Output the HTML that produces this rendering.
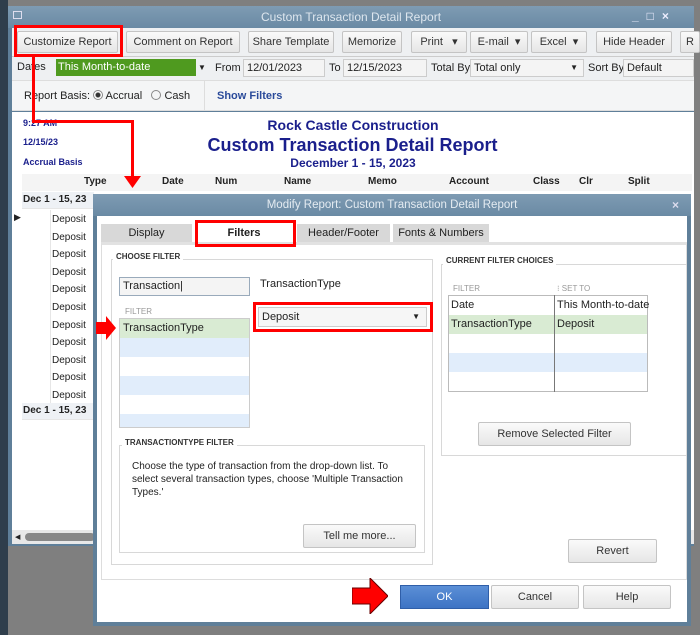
<!DOCTYPE html>
<html><head><style>
*{box-sizing:border-box;margin:0;padding:0}
body{width:700px;height:635px;position:relative;overflow:hidden;background:#7f7f7f;font-family:"Liberation Sans",Arial,sans-serif;font-size:11px;color:#222}
.a{position:absolute}
.btn{position:absolute;background:linear-gradient(#fafafa,#e6e6e6);border:1px solid #c4c4c4;border-radius:2px;text-align:center;font-size:11px;color:#333}
.red{position:absolute;border:3px solid #f00}
.rl{position:absolute;background:#f00}
.blue{color:#1a1f8c;font-weight:bold}
.row{position:absolute;left:22px;width:72px;height:17px;border-bottom:1px solid #e6e6e6}
.gb{position:absolute;border:1px solid #d8d8d8}
.gl{position:absolute;background:#fff;font-size:8px;font-weight:bold;color:#333;padding:0 3px}
</style></head><body>
<div class="a" style="left:0;top:0;width:8px;height:635px;background:#2f3e4c"></div>
<!-- main window -->
<div class="a" style="left:8px;top:6px;width:686px;height:540px;background:#5f7f99"></div>
<div class="a" style="left:8px;top:6px;width:686px;height:22px;background:linear-gradient(#7e9bb3,#6a8aa4);color:#dde6ee;font-size:12px;text-align:center;line-height:22px">Custom Transaction Detail Report</div>
<div class="a" style="left:13px;top:11px;width:9px;height:8px;border:1px solid #dde;"></div>
<div class="a" style="left:632px;top:9px;color:#eef;font-size:12px;font-weight:bold;letter-spacing:8px">_□×</div>
<div class="a" style="left:12px;top:28px;width:682px;height:28px;background:#eef0f2"></div>
<div class="btn" style="left:17px;top:31px;width:101px;height:22px;line-height:20px">Customize Report</div>
<div class="btn" style="left:126px;top:31px;width:114px;height:22px;line-height:20px">Comment on Report</div>
<div class="btn" style="left:248px;top:31px;width:86px;height:22px;line-height:20px">Share Template</div>
<div class="btn" style="left:342px;top:31px;width:60px;height:22px;line-height:20px">Memorize</div>
<div class="btn" style="left:411px;top:31px;width:56px;height:22px;line-height:20px">Print &nbsp; ▾</div>
<div class="btn" style="left:470px;top:31px;width:58px;height:22px;line-height:20px">E-mail &nbsp;▾</div>
<div class="btn" style="left:531px;top:31px;width:56px;height:22px;line-height:20px">Excel &nbsp;▾</div>
<div class="btn" style="left:596px;top:31px;width:76px;height:22px;line-height:20px">Hide Header</div>
<div class="btn" style="left:680px;top:31px;width:20px;height:22px;line-height:20px">R</div>
<div class="a" style="left:12px;top:56px;width:682px;height:24px;background:#eef0f2;border-top:1px solid #ccc"></div>
<div class="a" style="left:17px;top:61px">Dates</div>
<div class="a" style="left:56px;top:59px;width:140px;height:17px;background:#4f9a1f;color:#fff;padding-left:2px;line-height:17px">This Month-to-date</div>
<div class="a" style="left:198px;top:59px;width:14px;height:17px;font-size:8px;line-height:17px">▼</div>
<div class="a" style="left:215px;top:62px">From</div>
<div class="a" style="left:243px;top:59px;width:82px;height:18px;background:#f4f4f4;border:1px solid #ccc;padding-left:3px;line-height:16px">12/01/2023</div>
<div class="a" style="left:329px;top:62px">To</div>
<div class="a" style="left:343px;top:59px;width:84px;height:18px;background:#f4f4f4;border:1px solid #ccc;padding-left:3px;line-height:16px">12/15/2023</div>
<div class="a" style="left:431px;top:62px">Total By</div>
<div class="a" style="left:470px;top:59px;width:114px;height:18px;background:#f4f4f4;border:1px solid #ccc;padding-left:3px;line-height:16px">Total only<span style="float:right;font-size:8px;padding-right:5px">▼</span></div>
<div class="a" style="left:588px;top:62px">Sort By</div>
<div class="a" style="left:623px;top:59px;width:71px;height:18px;background:#f4f4f4;border:1px solid #ccc;padding-left:3px;line-height:16px">Default</div>
<div class="a" style="left:12px;top:80px;width:682px;height:31px;background:#f4f5f6;border-top:1px solid #ddd;border-bottom:1px solid #ddd"></div>
<div class="a" style="left:24px;top:90px">Report Basis: <span style="display:inline-block;width:10px;height:10px;border:1px solid #888;border-radius:50%;vertical-align:-1px;background:radial-gradient(#333 2px,#fff 3px)"></span> Accrual &nbsp; <span style="display:inline-block;width:10px;height:10px;border:1px solid #888;border-radius:50%;vertical-align:-1px"></span> Cash</div>
<div class="a" style="left:204px;top:81px;width:1px;height:29px;background:#ddd"></div>
<div class="a" style="left:217px;top:90px;color:#2a4a9a;font-weight:bold">Show Filters</div>
<div class="a" style="left:12px;top:112px;width:682px;height:418px;background:#fff"></div>
<div class="a blue" style="left:23px;top:118px;font-size:9px">9:27 AM</div>
<div class="a blue" style="left:23px;top:137px;font-size:9px">12/15/23</div>
<div class="a blue" style="left:23px;top:157px;font-size:9px">Accrual Basis</div>
<div class="a blue" style="left:222px;top:117px;width:262px;text-align:center;font-size:14px">Rock Castle Construction</div>
<div class="a blue" style="left:200px;top:135px;width:305px;text-align:center;font-size:18px">Custom Transaction Detail Report</div>
<div class="a blue" style="left:222px;top:156px;width:262px;text-align:center;font-size:12px">December 1 - 15, 2023</div>
<div class="a" style="left:22px;top:174px;width:670px;height:17px;background:#f4f4f4;font-weight:bold;font-size:10px;color:#222">
<span class="a" style="left:62px;top:2px">Type</span><span class="a" style="left:140px;top:2px">Date</span><span class="a" style="left:193px;top:2px">Num</span><span class="a" style="left:262px;top:2px">Name</span><span class="a" style="left:346px;top:2px">Memo</span><span class="a" style="left:427px;top:2px">Account</span><span class="a" style="left:511px;top:2px">Class</span><span class="a" style="left:557px;top:2px">Clr</span><span class="a" style="left:606px;top:2px">Split</span></div>
<div class="row" style="top:192px;background:#eef1f5;font-weight:bold;font-size:10px;padding:2px 0 0 1px">Dec 1 - 15, 23</div>
<div class="a" style="left:14px;top:212px;font-size:9px">▶</div>
<div class="a" style="left:22px;top:210px;width:72px;height:193px;">
<div style="position:absolute;left:28px;top:0;width:1px;height:193px;background:#e6e6e6"></div></div>
<div class="a" style="left:52px;top:211px;line-height:17.6px;font-size:10px">Deposit<br>Deposit<br>Deposit<br>Deposit<br>Deposit<br>Deposit<br>Deposit<br>Deposit<br>Deposit<br>Deposit<br>Deposit</div>
<div class="row" style="top:403px;background:#eef1f5;font-weight:bold;font-size:10px;padding:2px 0 0 1px">Dec 1 - 15, 23</div>
<div class="a" style="left:12px;top:530px;width:682px;height:14px;background:#e8e8e8"></div>
<div class="a" style="left:15px;top:533px;font-size:7px">◀</div>
<div class="a" style="left:25px;top:533px;width:70px;height:8px;background:#888;border-radius:4px"></div>
<!-- dialog -->
<div class="a" style="left:93px;top:194px;width:598px;height:432px;background:#5f7f99"></div>
<div class="a" style="left:93px;top:194px;width:598px;height:22px;background:linear-gradient(#7e9bb3,#6a8aa4);color:#e4ebf1;font-size:11.5px;text-align:center;line-height:22px">Modify Report: Custom Transaction Detail Report</div>
<div class="a" style="left:672px;top:198px;color:#dde;font-weight:bold;font-size:12px">×</div>
<div class="a" style="left:97px;top:216px;width:590px;height:406px;background:#fff"></div>
<div class="a" style="left:101px;top:224px;width:91px;height:19px;background:#d8d8d8;text-align:center;line-height:19px;font-size:11px">Display</div>
<div class="a" style="left:197px;top:224px;width:94px;height:19px;background:#fff;text-align:center;line-height:19px;font-weight:bold">Filters</div>
<div class="a" style="left:297px;top:224px;width:93px;height:19px;background:#d8d8d8;text-align:center;line-height:19px">Header/Footer</div>
<div class="a" style="left:393px;top:224px;width:96px;height:19px;background:#d8d8d8;text-align:center;line-height:19px">Fonts &amp; Numbers</div>
<div class="a" style="left:101px;top:242px;width:586px;height:338px;border:1px solid #ddd;border-top:3px solid #e2e2e2"></div>
<div class="gb" style="left:111px;top:259px;width:322px;height:306px"></div>
<div class="gl" style="left:113px;top:252px">CHOOSE FILTER</div>
<div class="a" style="left:119px;top:277px;width:131px;height:19px;border:1px solid #9ab;background:#f4f4f4;padding-left:3px;line-height:17px;font-size:11px">Transaction|</div>
<div class="a" style="left:260px;top:278px;font-size:11px">TransactionType</div>
<div class="a" style="left:125px;top:307px;font-size:8px;color:#999">FILTER</div>
<div class="a" style="left:119px;top:318px;width:131px;height:110px;border:1px solid #ccc;background:repeating-linear-gradient(#fff 0 19px,#e1edfb 19px 38px)"></div>
<div class="a" style="left:120px;top:319px;width:129px;height:19px;background:#d9ebd3;padding-left:3px;line-height:19px;font-size:11px">TransactionType</div>
<div class="a" style="left:120px;top:338px;width:129px;height:19px;background:#e1edfb"></div>
<div class="a" style="left:258px;top:307px;width:169px;height:20px;border:1px solid #ccc;background:#f6f6f6;padding-left:3px;line-height:18px;font-size:11px">Deposit<span style="float:right;font-size:8px;padding-right:6px">▼</span></div>
<div class="gb" style="left:441px;top:264px;width:246px;height:192px;border-right:none"></div>
<div class="gl" style="left:443px;top:256px">CURRENT FILTER CHOICES</div>
<div class="a" style="left:453px;top:284px;font-size:8px;color:#999">FILTER</div>
<div class="a" style="left:557px;top:284px;font-size:8px;color:#999">⁝ SET TO</div>
<div class="a" style="left:448px;top:295px;width:200px;height:97px;border:1px solid #bbb;background:repeating-linear-gradient(#fff 0 19px,#e1edfb 19px 38px)"></div>
<div class="a" style="left:449px;top:296px;width:198px;height:19px;background:#fff"></div>
<div class="a" style="left:449px;top:315px;width:198px;height:19px;background:#d9ebd3"></div>
<div class="a" style="left:449px;top:334px;width:198px;height:19px;background:#fff"></div>
<div class="a" style="left:449px;top:353px;width:198px;height:19px;background:#e1edfb"></div>
<div class="a" style="left:554px;top:295px;width:1px;height:97px;background:#777"></div>
<div class="a" style="left:451px;top:299px;font-size:11px">Date</div>
<div class="a" style="left:557px;top:299px;font-size:11px">This Month-to-date</div>
<div class="a" style="left:451px;top:318px;font-size:11px">TransactionType</div>
<div class="a" style="left:557px;top:318px;font-size:11px">Deposit</div>
<div class="btn" style="left:478px;top:422px;width:153px;height:24px;line-height:22px">Remove Selected Filter</div>
<div class="gb" style="left:119px;top:445px;width:306px;height:108px"></div>
<div class="gl" style="left:122px;top:438px">TRANSACTIONTYPE FILTER</div>
<div class="a" style="left:132px;top:460px;width:280px;font-size:10px;line-height:13px">Choose the type of transaction from the drop-down list. To select several transaction types, choose 'Multiple Transaction Types.'</div>
<div class="btn" style="left:303px;top:524px;width:113px;height:24px;line-height:22px">Tell me more...</div>
<div class="btn" style="left:568px;top:539px;width:89px;height:24px;line-height:22px">Revert</div>
<div class="a" style="left:400px;top:585px;width:89px;height:24px;background:linear-gradient(#5b8fd6,#3d73c4);border:1px solid #2f5ea8;color:#fff;text-align:center;line-height:22px">OK</div>
<div class="btn" style="left:491px;top:585px;width:88px;height:24px;line-height:22px">Cancel</div>
<div class="btn" style="left:583px;top:585px;width:88px;height:24px;line-height:22px">Help</div>
<!-- annotations -->
<div class="red" style="left:14px;top:25px;width:109px;height:32px"></div>
<div class="rl" style="left:32px;top:56px;width:3px;height:67px"></div>
<div class="rl" style="left:32px;top:120px;width:102px;height:3px"></div>
<div class="rl" style="left:131px;top:120px;width:3px;height:58px"></div>
<svg class="a" style="left:124px;top:176px" width="17" height="12"><polygon points="0,0 17,0 8.5,12" fill="#f00"/></svg>
<div class="red" style="left:195px;top:220px;width:101px;height:27px"></div>
<div class="red" style="left:253px;top:302px;width:180px;height:30px"></div>
<svg class="a" style="left:96px;top:316px" width="20" height="24"><polygon points="0,6 10,6 10,0 20,12 10,24 10,18 0,18" fill="#f00"/></svg>
<svg class="a" style="left:352px;top:578px" width="36" height="36"><polygon points="0,10 18,10 18,0 36,18 18,36 18,26 0,26" fill="#f00" stroke="#600" stroke-width="1"/></svg>
</body></html>
